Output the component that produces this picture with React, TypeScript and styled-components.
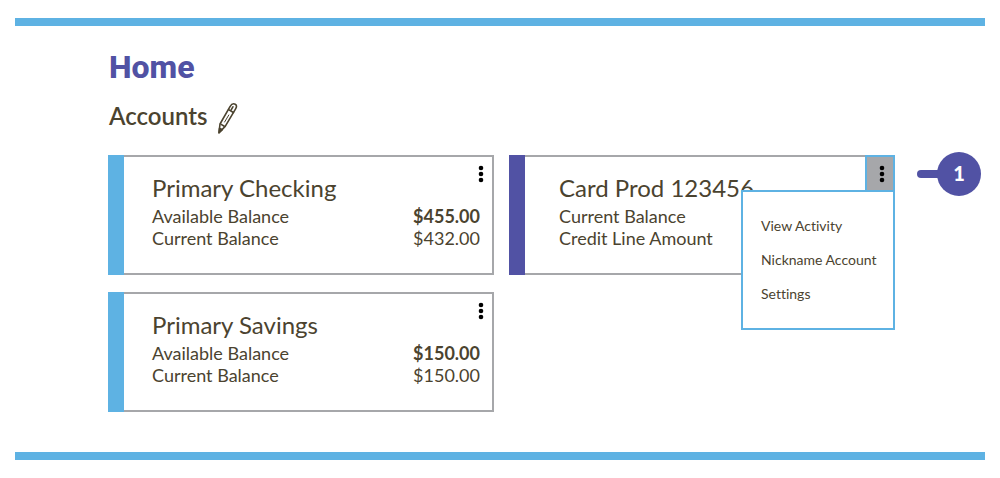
import React from "react";
import styled, { createGlobalStyle } from "styled-components";

const blue = "#5eb2e3";
const indigo = "#5152a4";
const ink = "#4b432f";
const grey = "#a6a7aa";

const GlobalStyle = createGlobalStyle`
  *, *::before, *::after { box-sizing: border-box; }
  body {
    margin: 0;
    background: #fff;
    color: ${ink};
    font-family: Lato, "Open Sans", sans-serif;
    font-variant-ligatures: none;
  }
`;

const Frame = styled.main`
  margin: 18px 15px;
  padding: 19px 90px 40px 93px;
  border-top: 8px solid ${blue};
  border-bottom: 8px solid ${blue};
`;

const PageTitle = styled.h1`
  margin: 0 0 13px;
  padding-left: 1px;
  color: ${indigo};
  font: 800 32px/44px Roboto, sans-serif;
`;

const SectionHeader = styled.header`
  display: flex;
  align-items: center;
  gap: 10px;
  height: 32px;
  margin-bottom: 21px;
  padding-left: 1px;
`;

const SectionTitle = styled.h2`
  margin: 0;
  padding-bottom: 4px;
  font-size: 24px;
  line-height: 28px;
  font-weight: 600;
`;

const IconButton = styled.button`
  display: flex;
  padding: 0;
  border: 0;
  background: none;
  color: inherit;
  cursor: pointer;
`;

const CardGrid = styled.div`
  display: grid;
  grid-template-columns: repeat(2, minmax(0, 1fr));
  gap: 17px 15px;
`;

const Card = styled.article<{ $accent: string; $indent: number }>`
  position: relative;
  padding: 16px 12px 24px ${(p) => p.$indent}px;
  border: 2px solid ${grey};
  border-left: 0;

  &::before {
    content: "";
    position: absolute;
    inset: -2px auto -2px 0;
    width: 16px;
    background: ${(p) => p.$accent};
  }
`;

const CardTitle = styled.h3`
  margin: 0 0 2px;
  font-size: 24px;
  line-height: 30px;
  font-weight: 400;
`;

const Balances = styled.dl`
  margin: 0;
`;

const BalanceRow = styled.div`
  display: flex;
  justify-content: space-between;
  font-size: 18px;
  line-height: 22px;
`;

const Label = styled.dt``;

const Amount = styled.dd<{ $strong: boolean }>`
  margin: 0;
  font-weight: ${(p) => (p.$strong ? 700 : 400)};
`;

const Kebab = styled.button<{ $open: boolean }>`
  position: absolute;
  top: -2px;
  right: -2px;
  display: flex;
  align-items: center;
  justify-content: center;
  width: 30px;
  height: 37px;
  padding: 0 0 0 4px;
  border: 2px solid ${(p) => (p.$open ? blue : "transparent")};
  border-right-color: ${(p) => (p.$open ? blue : grey)};
  border-top-color: ${(p) => (p.$open ? blue : grey)};
  background: ${(p) => (p.$open ? grey : "none")};
  cursor: pointer;
`;

const Menu = styled.ul`
  position: absolute;
  top: 33px;
  right: -2px;
  width: 154px;
  margin: 0;
  padding: 17px 0;
  border: 2px solid ${blue};
  background: #fff;
  list-style: none;
`;

const MenuItem = styled.button`
  display: block;
  width: 100%;
  padding: 0 0 0 18px;
  border: 0;
  background: none;
  color: inherit;
  font: 400 14px/34px Lato, sans-serif;
  font-variant-ligatures: none;
  text-align: left;
  white-space: nowrap;
  cursor: pointer;
`;

const Callout = styled.div`
  position: absolute;
  top: -5px;
  left: calc(100% + 24px);
  display: flex;
  align-items: center;

  &::before {
    content: "";
    width: 24px;
    height: 8px;
    margin-right: -4px;
    border-radius: 4px 0 0 4px;
    background: ${indigo};
  }
`;

const CalloutNumber = styled.span`
  width: 44px;
  height: 44px;
  border-radius: 50%;
  background: ${indigo};
  color: #fff;
  font: 900 20px/42px Lato, sans-serif;
  text-align: center;
`;

const PenIcon = () => (
  <svg width="22" height="32" viewBox="0 0 22 32" fill="none" stroke="currentColor" strokeWidth="1.6" strokeLinejoin="round" strokeLinecap="round" aria-hidden="true">
    <path d="M13 4.6C14.4 2.2 16.6 1.4 18.2 2.2c1.7.9 1.6 2.6.4 4.6L8.2 24.4 2 30.8l1-8.8Z" />
    <path d="m11.6 7.6 4.8 2.9M4.2 22.4l3 1.8M15.9 4.8l-1.6 2.8" />
    <path d="M11.8 13 7.6 20" strokeWidth="1" />
    <path d="m2 30.8.5-4.4 2.8 1.2Z" fill="currentColor" />
  </svg>
);

const DotsIcon = () => (
  <svg width="6" height="18" viewBox="0 0 6 18" fill="#000" aria-hidden="true">
    <circle cx="3" cy="3" r="2.3" />
    <circle cx="3" cy="9" r="2.3" />
    <circle cx="3" cy="15" r="2.3" />
  </svg>
);

type Balance = { label: string; amount?: string; strong?: boolean };

type Account = {
  name: string;
  accent: string;
  indent: number;
  balances: Balance[];
  menu?: string[];
  callout?: number;
};

const accounts: Account[] = [
  {
    name: "Primary Checking",
    accent: blue,
    indent: 44,
    balances: [
      { label: "Available Balance", amount: "$455.00", strong: true },
      { label: "Current Balance", amount: "$432.00" },
    ],
  },
  {
    name: "Card Prod 123456",
    accent: indigo,
    indent: 50,
    balances: [{ label: "Current Balance" }, { label: "Credit Line Amount" }],
    menu: ["View Activity", "Nickname Account", "Settings"],
    callout: 1,
  },
  {
    name: "Primary Savings",
    accent: blue,
    indent: 44,
    balances: [
      { label: "Available Balance", amount: "$150.00", strong: true },
      { label: "Current Balance", amount: "$150.00" },
    ],
  },
];

const AccountCard = ({ account }: { account: Account }) => (
  <Card $accent={account.accent} $indent={account.indent}>
    <CardTitle>{account.name}</CardTitle>
    <Balances>
      {account.balances.map((b) => (
        <BalanceRow key={b.label}>
          <Label>{b.label}</Label>
          {b.amount && <Amount $strong={!!b.strong}>{b.amount}</Amount>}
        </BalanceRow>
      ))}
    </Balances>
    <Kebab $open={!!account.menu} aria-label={`${account.name} options`} aria-expanded={!!account.menu}>
      <DotsIcon />
    </Kebab>
    {account.menu && (
      <Menu>
        {account.menu.map((item) => (
          <li key={item}>
            <MenuItem>{item}</MenuItem>
          </li>
        ))}
      </Menu>
    )}
    {account.callout && (
      <Callout>
        <CalloutNumber>{account.callout}</CalloutNumber>
      </Callout>
    )}
  </Card>
);

export default function App() {
  return (
    <>
      <GlobalStyle />
      <Frame>
        <PageTitle>Home</PageTitle>
        <SectionHeader>
          <SectionTitle>Accounts</SectionTitle>
          <IconButton aria-label="Edit accounts">
            <PenIcon />
          </IconButton>
        </SectionHeader>
        <CardGrid>
          {accounts.map((account) => (
            <AccountCard key={account.name} account={account} />
          ))}
        </CardGrid>
      </Frame>
    </>
  );
}
